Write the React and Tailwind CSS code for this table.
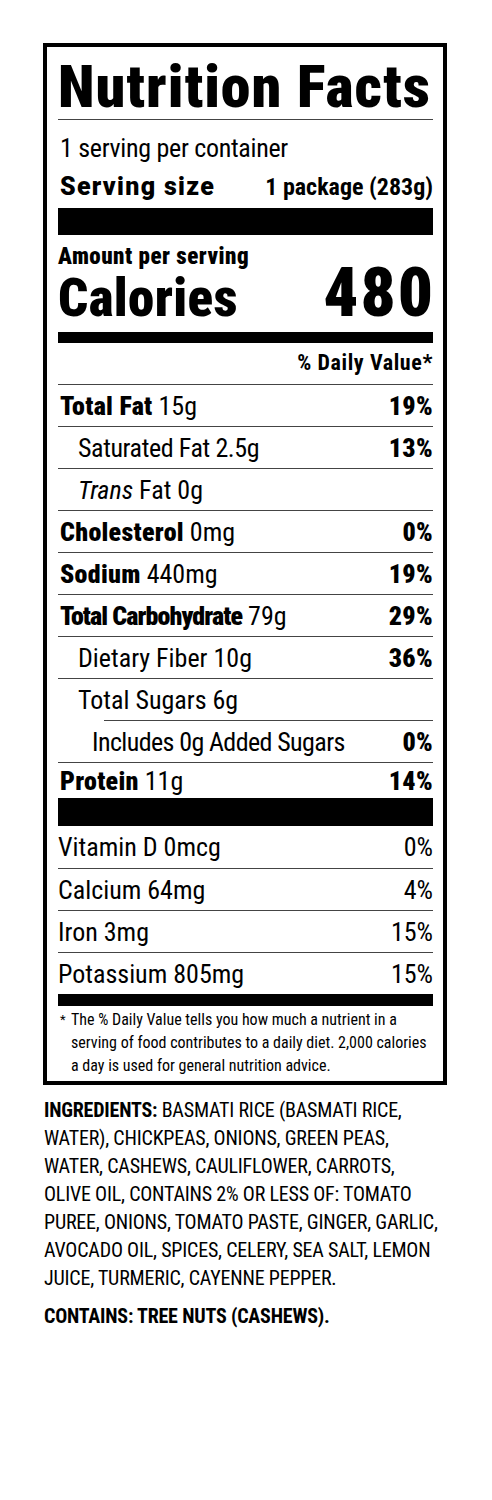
const rows = [
  { name: "Total Fat", amt: "15g", dv: "19%", bold: true },
  { name: "Saturated Fat 2.5g", dv: "13%", indent: "pl-[20px] tracking-[-0.4px]" },
  { name: <><i>Trans</i> Fat 0g</>, indent: "pl-[20px]" },
  { name: "Cholesterol", amt: "0mg", dv: "0%", bold: true },
  { name: "Sodium", amt: "440mg", dv: "19%", bold: true },
  { name: "Total Carbohydrate", amt: "79g", dv: "29%", bold: true, tight: true },
  { name: "Dietary Fiber 10g", dv: "36%", indent: "pl-[20px]" },
  { name: "Total Sugars 6g", indent: "pl-[20px]" },
];

const vitamins = [
  { name: "Vitamin D 0mcg", dv: "0%" },
  { name: "Calcium 64mg", dv: "4%" },
  { name: "Iron 3mg", dv: "15%" },
  { name: "Potassium 805mg", dv: "15%" },
];

function Row({ row }) {
  return (
    <div className="h-[42px] border-t border-[#444] flex items-center justify-between">
      <span className={"text-[26px] leading-none " + (row.indent || "pl-[2px]")}>
        {row.bold ? (
          <b className={"font-black " + (row.tight ? "tracking-[-0.9px]" : "tracking-[0.3px]")}>{row.name}</b>
        ) : (
          row.name
        )}
        {row.amt && " " + row.amt}
      </span>
      {row.dv && <span className="text-[26px] leading-none font-black tracking-[0.3px]">{row.dv}</span>}
    </div>
  );
}

export default function App() {
  return (
    <div className="min-h-screen bg-white text-black font-['Roboto_Condensed',sans-serif] pt-[43px]">
      <div className="ml-[43px] w-[404px] border-4 border-black pl-[11px] pr-[10px] pb-[4px]">
        <h1 className="pt-[10px] text-[60px] leading-[60px] font-black tracking-[1px] whitespace-nowrap">Nutrition Facts</h1>
        <div className="mt-[2px] h-px bg-[#444]"></div>
        <p className="mt-[11px] text-[26px] leading-[34px] pl-[2px] tracking-[-0.3px]">1 serving per container</p>
        <div className="mt-[7px] flex justify-between items-baseline leading-[30px]">
          <span className="font-['Roboto',sans-serif] text-[25px] font-black pl-[2px] tracking-[1.3px]">Serving size</span>
          <span className="text-[24px] font-bold">1 package (283g)</span>
        </div>
        <div className="mt-[6px] h-[27px] bg-black"></div>
        <p className="mt-[12px] text-[23px] leading-[20px] font-black tracking-[0.5px]">Amount per serving</p>
        <div className="mt-[3px] flex justify-between items-baseline">
          <span className="text-[53px] leading-[46px] font-black tracking-[0.4px]">Calories</span>
          <span className="text-[69px] leading-[46px] font-black tracking-[2px] -mr-[2px]">480</span>
        </div>
        <div className="mt-[11px] h-[11px] bg-black"></div>
        <p className="mt-[8px] text-right text-[22px] leading-[24px] font-bold tracking-[0.6px]">% Daily Value*</p>
        <div className="mt-[9px]">
          {rows.map((r, i) => (
            <Row key={i} row={r} />
          ))}
          <div className="ml-[46px] h-px bg-[#444]"></div>
          <div className="h-[41px] flex items-center justify-between">
            <span className="text-[26px] leading-none pl-[34px] tracking-[-0.6px]">Includes 0g Added Sugars</span>
            <span className="text-[26px] leading-none font-black tracking-[0.3px]">0%</span>
          </div>
          <div className="h-[36px] border-t border-[#444] flex items-center justify-between">
            <span className="text-[26px] leading-none pl-[2px]">
              <b className="font-black tracking-[0.3px]">Protein</b> 11g
            </span>
            <span className="text-[26px] leading-none font-black tracking-[0.3px]">14%</span>
          </div>
        </div>
        <div className="h-[28px] bg-black"></div>
        {vitamins.map((v, i) => (
          <div
            key={v.name}
            className={"flex items-center justify-between " + (i === 0 ? "h-[42px]" : "h-[42px] border-t border-[#444]")}
          >
            <span className="text-[26px] leading-none">{v.name}</span>
            <span className="text-[26px] leading-none">{v.dv}</span>
          </div>
        ))}
        <div className="h-[12px] bg-black"></div>
        <div className="mt-[2px] flex text-[16px] leading-[23px]">
          <span className="w-[13px] pl-[2px] text-[13px]">*</span>
          <p>
            The % Daily Value tells you how much a nutrient in a<br />
            serving of food contributes to a daily diet. 2,000 calories<br />
            a day is used for general nutrition advice.
          </p>
        </div>
      </div>
      <div className="ml-[44px] mt-[11px] text-[20px] leading-[28px] uppercase tracking-[-0.2px]">
        <p>
          <b className="font-bold">Ingredients:</b> Basmati rice (basmati rice,<br />
          water), chickpeas, onions, green peas,<br />
          water, cashews, cauliflower, carrots,<br />
          olive oil, contains 2% or less of: tomato<br />
          puree, onions, tomato paste, ginger, garlic,<br />
          avocado oil, spices, celery, sea salt, lemon<br />
          juice, turmeric, cayenne pepper.
        </p>
        <p className="mt-[10px] font-bold">Contains: tree nuts (cashews).</p>
      </div>
    </div>
  );
}
